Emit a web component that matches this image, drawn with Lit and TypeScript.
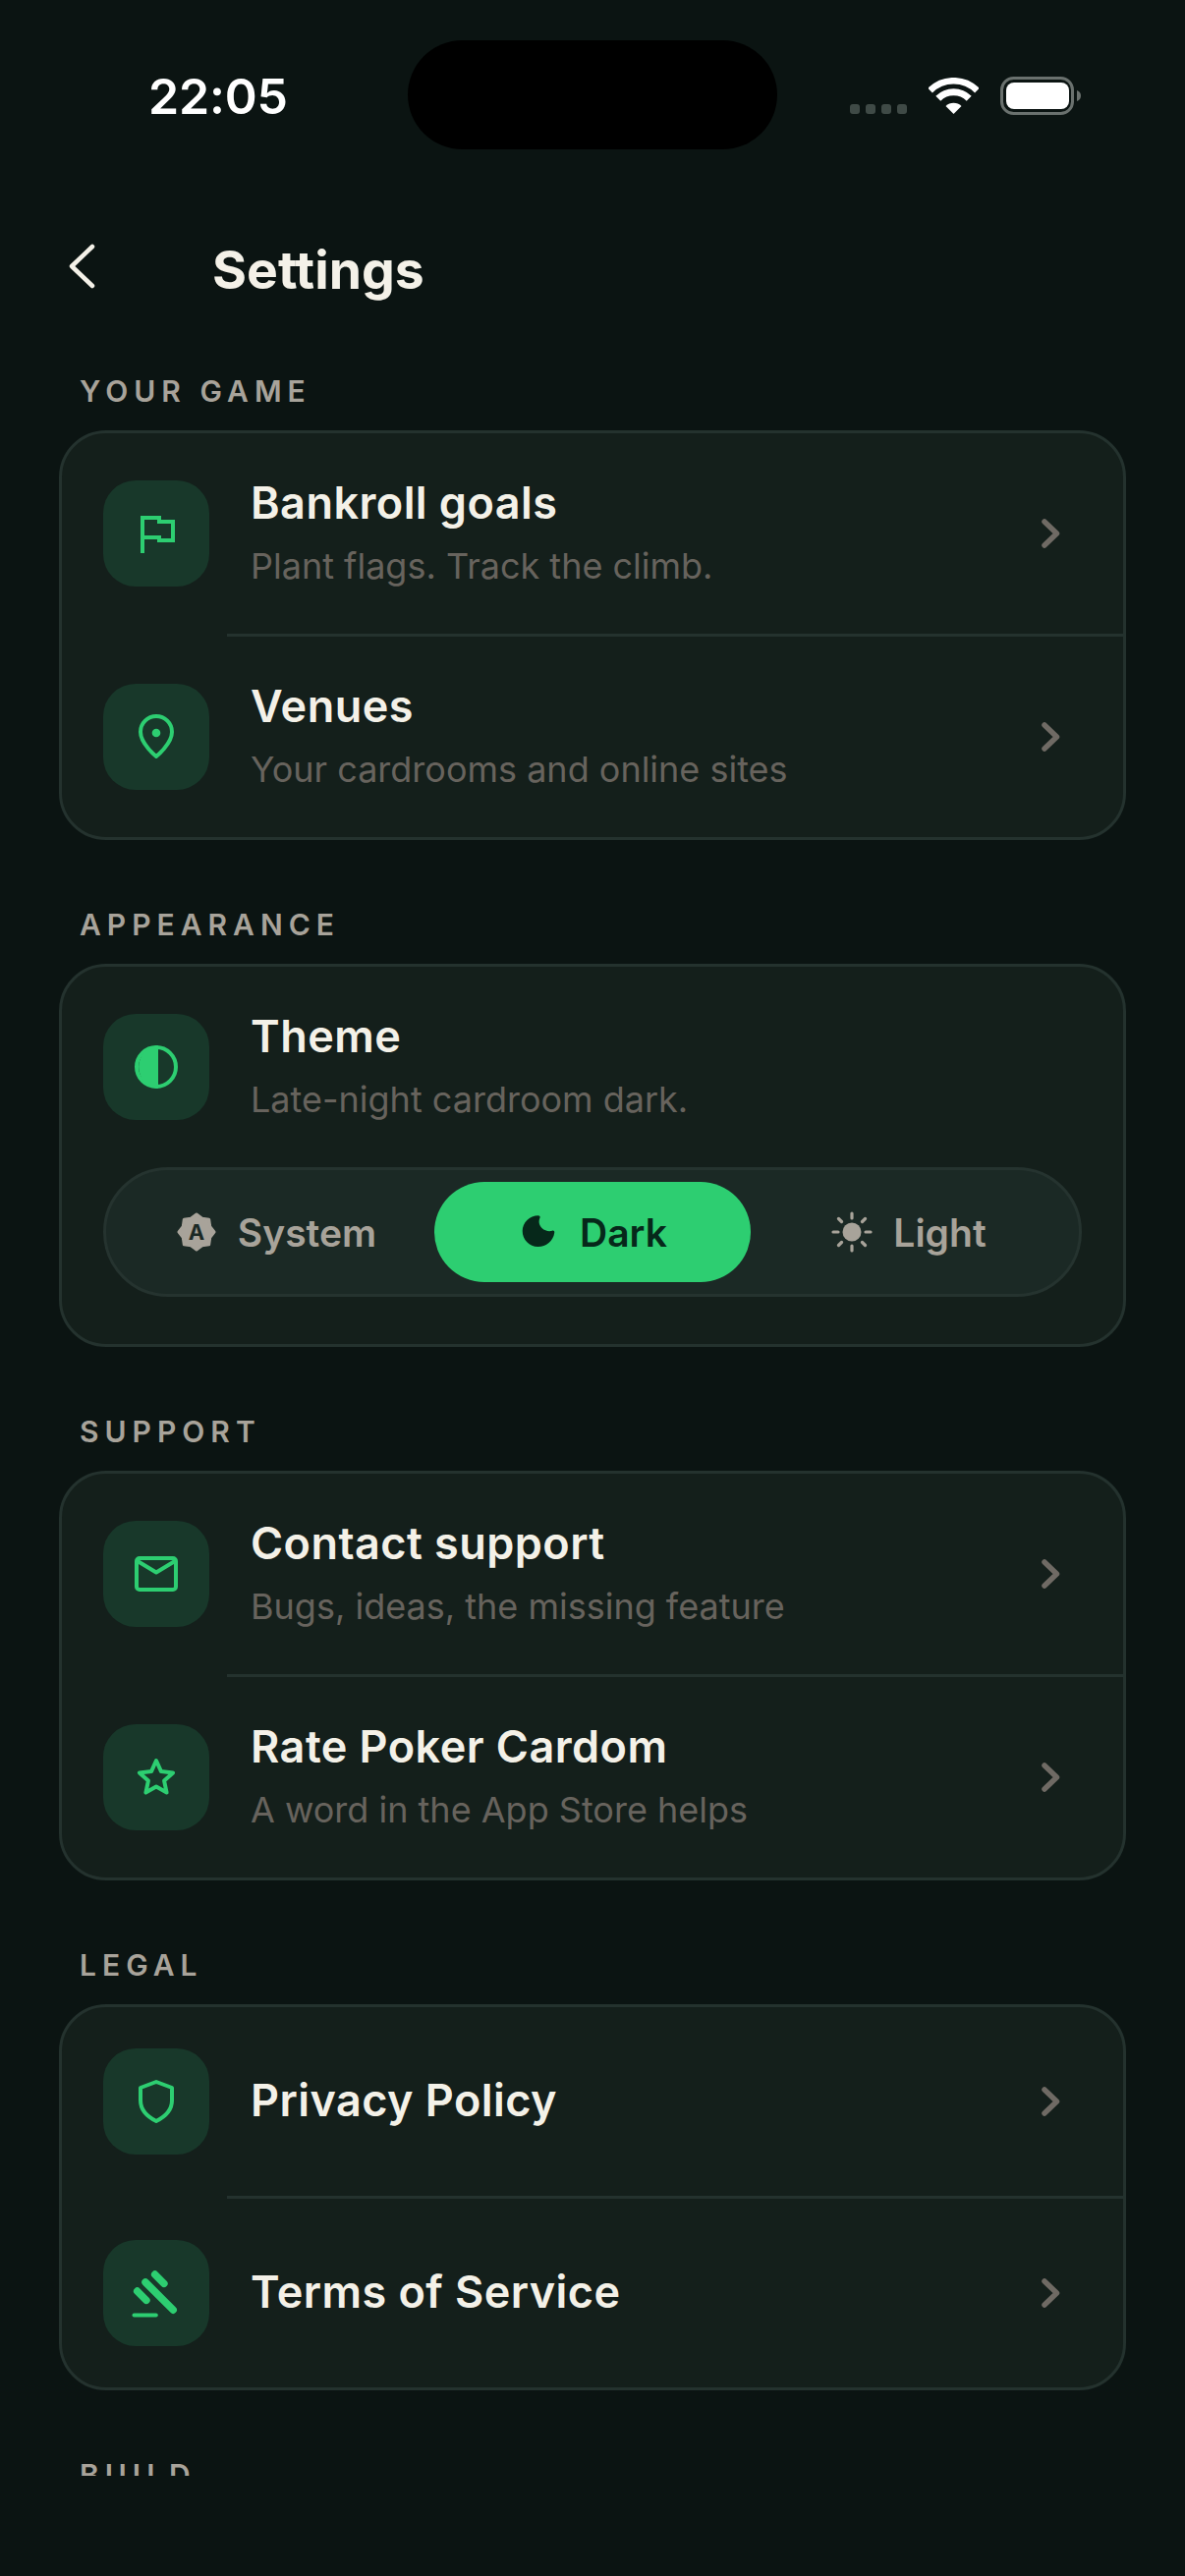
import { LitElement, html, css, svg } from 'lit';
import { customElement } from 'lit/decorators.js';

const icons: Record<string, unknown> = {
  flag: svg`<path class="ln miter" d="M40 74V38H57V42H71V61H57V58H40"/>`,
  pin: svg`<path class="ln" d="M54 74C54 74 38 61 38 49A16 16 0 0 1 70 49C70 61 54 74 54 74Z"/><circle class="fl" cx="54" cy="50" r="4.3"/>`,
  theme: svg`<circle class="ln" cx="54" cy="54" r="20"/><path class="fl" d="M56 32.1V75.9A22 22 0 0 1 56 32.1Z"/>`,
  mail: svg`<rect class="ln" x="34" y="38" width="40" height="32" rx="3"/><path class="ln" d="M35 41L54 52.5L73 41"/>`,
  star: svg`<path class="ln" d="M54 37L59 48.1L71.1 49.4L62.1 57.6L64.6 69.6L54 63.5L43.4 69.6L45.9 57.6L36.9 49.4L49 48.1Z"/>`,
  shield: svg`<path class="ln" d="M54 34L70 40V53C70 63 62 70 54 74C46 70 38 63 38 53V40Z"/>`,
  gavel: svg`<g class="ln thick"><path d="M52.700 35.100L61.900 44.300"/><path d="M43 43L71.200 71.200"/><path d="M34.700 52.100L43.900 61.300"/></g><path class="ln" d="M31.500 76.500H53.800"/>`,
};

const sections = [
  {
    label: 'YOUR GAME',
    rows: [
      { icon: 'flag', title: 'Bankroll goals', sub: 'Plant flags. Track the climb.' },
      { icon: 'pin', title: 'Venues', sub: 'Your cardrooms and online sites' },
    ],
  },
  { label: 'APPEARANCE', theme: true, rows: [] },
  {
    label: 'SUPPORT',
    rows: [
      { icon: 'mail', title: 'Contact support', sub: 'Bugs, ideas, the missing feature' },
      { icon: 'star', title: 'Rate Poker Cardom', sub: 'A word in the App Store helps' },
    ],
  },
  {
    label: 'LEGAL',
    rows: [
      { icon: 'shield', title: 'Privacy Policy', sub: '' },
      { icon: 'gavel', title: 'Terms of Service', sub: '' },
    ],
  },
];

@customElement('app-root')
export class AppRoot extends LitElement {
  static styles = css`
    :host {
      display: block;
      width: 1206px;
      height: 2622px;
      background: #0b1412;
      font-family: Inter, "Liberation Sans", sans-serif;
      overflow: hidden;
    }

    .status {
      display: grid;
      grid-template-columns: 415px 376px 1fr;
      height: 152px;
      padding-top: 41px;
      box-sizing: border-box;
    }

    .time {
      padding: 27px 0 0 151px;
      font-size: 50px;
      line-height: 60px;
      font-weight: 600;
      letter-spacing: -0.2px;
      color: #fff;
    }

    .island {
      background: #000;
      border-radius: 56px;
      height: 111px;
    }

    .sys {
      display: flex;
      align-items: flex-start;
      padding: 37px 0 0 74px;
    }

    .dots {
      display: flex;
      gap: 6px;
      margin-top: 28px;
      width: 80px;
    }

    .dots i {
      width: 10px;
      height: 10px;
      border-radius: 3px;
      background: #3f4a46;
    }

    .wifi {
      width: 51px;
      height: 37px;
      margin: 1px 22px 0 0;
    }

    .battery {
      width: 84px;
      height: 41px;
    }

    .head {
      display: flex;
      align-items: center;
      box-sizing: border-box;
      height: 228px;
      padding: 18px 0 0 68px;
    }

    .back {
      width: 32px;
      height: 48px;
      margin-right: 116px;
      margin-top: -8px;
    }

    h1 {
      margin: 0;
      font-size: 53.5px;
      line-height: 66px;
      font-weight: 700;
      color: #f4f1e8;
    }

    .scroll {
      height: 2140px;
      overflow: hidden;
      padding: 0 60px;
    }

    .label {
      margin: 0 0 0 21px;
      padding-top: 68px;
      height: 58px;
      font-size: 30px;
      line-height: 36px;
      font-weight: 600;
      letter-spacing: 6px;
      color: #a8a39a;
    }

    .label.first {
      padding-top: 0;
    }

    .card {
      border: 3px solid #24322e;
      border-radius: 48px;
      background: #141f1b;
      overflow: hidden;
    }

    .row {
      display: flex;
      align-items: center;
      padding: 42px 0 42px 42px;
      position: relative;
    }

    .row + .row {
      border-top: 3px solid transparent;
    }

    .row + .row::before {
      content: "";
      position: absolute;
      left: 168px;
      right: 0;
      top: -3px;
      height: 3px;
      background: #24322e;
    }

    .tile {
      flex: none;
      width: 108px;
      height: 108px;
      border-radius: 33px;
      background: #18382a;
      margin-right: 42px;
    }

    .tile svg {
      display: block;
      width: 108px;
      height: 108px;
    }

    .ln {
      fill: none;
      stroke: #2dce71;
      stroke-width: 4;
      stroke-linecap: round;
      stroke-linejoin: round;
    }

    .miter {
      stroke-linecap: butt;
      stroke-linejoin: miter;
    }

    .thick {
      stroke-width: 7.5;
    }

    .fl {
      fill: #2dce71;
    }

    .text {
      flex: 1;
    }

    .title {
      font-size: 45px;
      line-height: 57px;
      font-weight: 600;
      letter-spacing: 0.45px;
      color: #f4f1e8;
    }

    .title:only-child {
      margin-bottom: 3px;
    }

    .sub {
      margin-top: 9px;
      font-size: 36px;
      line-height: 54px;
      color: #67635d;
    }

    .chev {
      flex: none;
      width: 30px;
      height: 36px;
      margin-right: 58px;
    }

    .seg {
      display: flex;
      margin: 0 42px 48px;
      padding: 12px;
      height: 102px;
      border: 3px solid #25332f;
      border-radius: 66px;
      background: #1b2925;
    }

    .opt {
      flex: 1;
      display: flex;
      align-items: center;
      justify-content: center;
      gap: 21px;
      border-radius: 51px;
      font-size: 39px;
      font-weight: 600;
      color: #a8a39a;
    }

    .opt svg {
      width: 42px;
      height: 42px;
    }

    .on {
      background: #2dce71;
      color: #06281a;
    }
  `;

  renderRow(r: { icon: string; title: string; sub: string }) {
    return html`
      <div class="row">
        <div class="tile"><svg viewBox="0 0 108 108">${icons[r.icon]}</svg></div>
        <div class="text">
          <div class="title">${r.title}</div>
          ${r.sub ? html`<div class="sub">${r.sub}</div>` : ''}
        </div>
        <svg class="chev" viewBox="0 0 30 36" fill="none" stroke="#6f6a64" stroke-width="5.500" stroke-linecap="round" stroke-linejoin="round">
          <path d="M8 6L20.500 18L8 30"/>
        </svg>
      </div>
    `;
  }

  renderTheme() {
    return html`
      <div class="row">
        <div class="tile"><svg viewBox="0 0 108 108">${icons.theme}</svg></div>
        <div class="text">
          <div class="title">Theme</div>
          <div class="sub">Late-night cardroom dark.</div>
        </div>
      </div>
      <div class="seg">
        <div class="opt">
          <svg viewBox="0 0 42 42">
            <path fill="#a8a39a" stroke="#a8a39a" stroke-width="3" stroke-linejoin="round" d="M21 3L26.700 7.300L33.700 8.300L34.700 15.300L39 21L34.700 26.700L33.700 33.700L26.700 34.700L21 39L15.300 34.700L8.300 33.700L7.300 26.700L3 21L7.300 15.300L8.300 8.300L15.300 7.300Z"/>
            <text x="21" y="28.500" text-anchor="middle" font-size="22" font-weight="700" fill="#1b2925">A</text>
          </svg>
          <span>System</span>
        </div>
        <div class="opt on">
          <svg viewBox="0 0 42 42">
            <path fill="#06281a" d="M21 4.200C22.800 4.500 23 5.800 22.300 7C21 10 21.500 14 24.500 17C27.500 20 32 20.700 35 19.700C36.700 19.200 37.600 20.400 37.200 22C36 30 29 36 20.500 36C11.800 36 4.700 28.800 4.700 20C4.700 11.500 11.800 4.200 21 4.200Z"/>
          </svg>
          <span>Dark</span>
        </div>
        <div class="opt">
          <svg viewBox="0 0 42 42" fill="none" stroke="#a8a39a" stroke-width="3.200" stroke-linecap="round">
            <circle cx="21" cy="21" r="9.500" fill="#a8a39a" stroke="none"/>
            <path d="M21 2V7M21 35V40M2 21H7M35 21H40M7.500 7.500L10.500 10.500M31.500 31.500L34.500 34.500M7.500 34.500L10.500 31.500M31.500 10.500L34.500 7.500"/>
          </svg>
          <span>Light</span>
        </div>
      </div>
    `;
  }

  render() {
    return html`
      <div class="status">
        <div class="time">22:05</div>
        <div class="island"></div>
        <div class="sys">
          <div class="dots"><i></i><i></i><i></i><i></i></div>
          <svg class="wifi" viewBox="0 0 51 37" fill="none" stroke="#fff">
            <path stroke-width="6.500" d="M1.600 13.100A33.800 33.800 0 0 1 49.400 13.100"/>
            <path stroke-width="7" d="M9.800 21.300A22.200 22.200 0 0 1 41.200 21.300"/>
            <path fill="#fff" stroke="none" d="M25.500 37L17.500 29A11.300 11.300 0 0 1 33.500 29Z"/>
          </svg>
          <svg class="battery" viewBox="0 0 84 41">
            <rect x="1.500" y="1.500" width="72" height="36" rx="12" fill="none" stroke="#6a716e" stroke-width="3"/>
            <rect x="6" y="6" width="64" height="27" rx="8" fill="#fff"/>
            <path fill="#6a716e" d="M78 14C81 15 82 17 82 19.500C82 22 81 24 78 25Z"/>
          </svg>
        </div>
      </div>
      <div class="head">
        <svg class="back" viewBox="0 0 32 48" fill="none" stroke="#f4f1e8" stroke-width="4.500" stroke-linecap="round" stroke-linejoin="round">
          <path d="M26 4L5 24L26 44"/>
        </svg>
        <h1>Settings</h1>
      </div>
      <div class="scroll">
        ${sections.map(
          (s, i) => html`
            <div class="label ${i === 0 ? 'first' : ''}">${s.label}</div>
            <div class="card">
              ${s.theme ? this.renderTheme() : s.rows.map((r) => this.renderRow(r))}
            </div>
          `,
        )}
        <div class="label">BUILD</div>
      </div>
    `;
  }
}
